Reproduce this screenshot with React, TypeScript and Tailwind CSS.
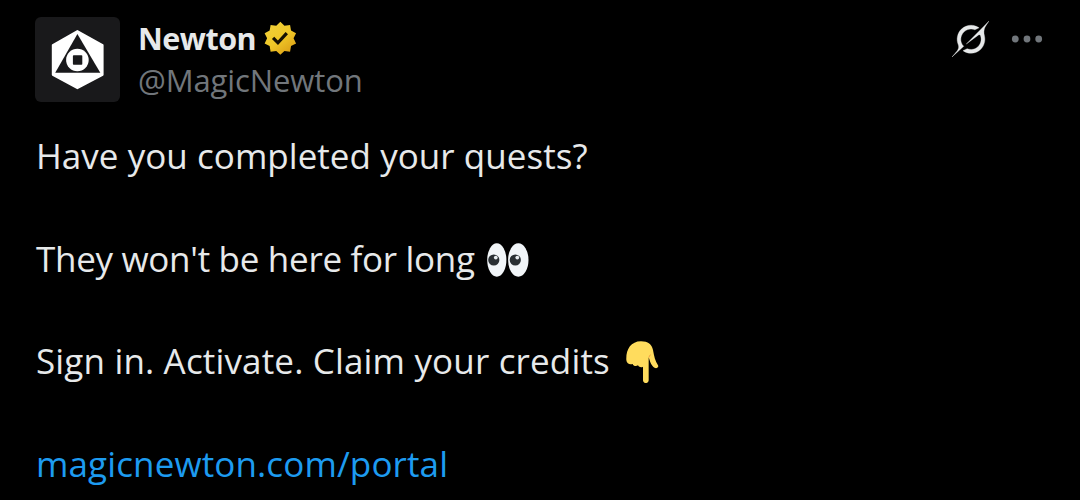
import type { ReactNode } from "react";

function Avatar() {
  return (
    <div className="size-[85px] shrink-0 overflow-hidden rounded-md bg-[#19191b]">
      <svg viewBox="0 0 85 85" className="size-full">
        <path
          d="M42.4 14 67.6 28.2V57.8L42.4 71.2 17.8 57.8V28.2Z"
          fill="#fff"
          stroke="#fff"
          strokeWidth="2"
          strokeLinejoin="round"
        />
        <path d="M42.4 17 65.3 55.8H20.2Z" fill="#19191b" />
        <circle cx="42.4" cy="43" r="11.3" fill="#fff" />
        <rect x="37.9" y="38.3" width="9.4" height="9.4" rx="0.8" fill="#19191b" />
      </svg>
    </div>
  );
}

function GoldBadge() {
  return (
    <svg viewBox="0 0 22 22" className="size-[38.7px] shrink-0">
      <defs>
        <linearGradient id="gold" x1="4" y1="2" x2="18" y2="20" gradientUnits="userSpaceOnUse">
          <stop offset="0" stopColor="#efcf3a" />
          <stop offset="0.5" stopColor="#f0c828" />
          <stop offset="1" stopColor="#d99b14" />
        </linearGradient>
      </defs>
      <path
        fill="url(#gold)"
        d="M13.324 3.848L11 1.6 8.676 3.848l-3.201-.453-.559 3.184L2.06 8.095 3.48 11l-1.42 2.904 2.856 1.516.559 3.184 3.201-.452L11 20.4l2.324-2.248 3.201.452.559-3.184 2.856-1.516L18.52 11l1.42-2.905-2.856-1.516-.559-3.184z"
      />
      <path
        fill="#151003"
        d="M6.234 11.423l3.428 3.428 5.683-6.206-1.347-1.247-4.4 4.795-2.072-2.072z"
      />
    </svg>
  );
}

function GrokIcon() {
  return (
    <svg viewBox="0 0 33 32" className="h-[36px] w-[37px]" fill="#e7e9ea" stroke="#e7e9ea" strokeWidth="0.3">
      <path d="M12.745 20.54l10.97-8.19c.539-.4 1.307-.244 1.564.38 1.349 3.288.746 7.241-1.938 9.955-2.683 2.714-6.417 3.31-9.83 1.954l-3.728 1.745c5.347 3.697 11.84 2.782 15.898-1.324 3.219-3.255 4.216-7.692 3.284-11.693l.008.009c-1.351-5.878.332-8.227 3.782-13.031L33 0l-4.54 4.59v-.014L12.743 20.544m-2.263 1.987c-3.837-3.707-3.175-9.446.1-12.755 2.42-2.449 6.388-3.448 9.852-1.979l3.72-1.737c-.67-.49-1.53-1.017-2.515-1.387-4.455-1.854-9.789-.931-13.41 2.728-3.483 3.523-4.579 8.94-2.697 13.561 1.405 3.454-.899 5.898-3.22 8.364C1.49 30.2.666 31.074 0 32l10.478-9.466" />
    </svg>
  );
}

function MoreIcon() {
  return (
    <svg viewBox="0 0 32 8" className="h-2 w-8" fill="#71767b">
      <circle cx="4.3" cy="4" r="3.4" />
      <circle cx="16" cy="4" r="3.4" />
      <circle cx="27.7" cy="4" r="3.4" />
    </svg>
  );
}

function Eyes() {
  return (
    <svg viewBox="0 0 42 34" className="h-[34px] w-[42px] shrink-0">
      <ellipse cx="9.8" cy="17" rx="9.6" ry="16.7" fill="#f1f5f8" />
      <ellipse cx="31.3" cy="17" rx="10.2" ry="16.7" fill="#f1f5f8" />
      <circle cx="6.8" cy="17" r="5.6" fill="#292f33" />
      <circle cx="28.3" cy="17" r="5.6" fill="#292f33" />
      <circle cx="8.8" cy="14.6" r="1.9" fill="#e8edf0" />
      <circle cx="30.3" cy="14.6" r="1.9" fill="#e8edf0" />
    </svg>
  );
}

function PointingHand() {
  return (
    <svg viewBox="0 0 98 127" className="h-[42.3px] w-[32.7px] shrink-0" fill="#ffdc5d">
      <path d="M1 58C-1 28 13 1 45 1C66 1 78 10 81 27C84 45 88 61 96 73C99 78 93 83 87 81C80 78 76 71 73 64L68 49L68 118C68 129 51 129 51 118V77C47 80 40 80 36 73C31 77 22 76 20 69C12 72 2 69 1 58Z" />
      <path d="M69 49C71 44 72 42 74 41" fill="none" stroke="#ef9645" strokeWidth="3" />
    </svg>
  );
}

function Line({ children }: { children: ReactNode }) {
  return <p className="flex h-[51.3px] items-center whitespace-pre">{children}</p>;
}

export default function App() {
  return (
    <article className="h-[500px] w-[1080px] overflow-hidden bg-black pl-[35px] pr-[37px] pt-[17px] font-['Open_Sans',sans-serif] font-[450] text-[#e7e9ea]">
      <header className="flex h-[85px]">
        <Avatar />
        <div className="ml-[18px] flex flex-col">
          <div className="flex h-[42px] items-center">
            <span className="text-[30.5px] font-bold leading-[42px] tracking-[-0.5px]">Newton</span>
            <span className="ml-[5px]"><GoldBadge /></span>
          </div>
          <span className="text-[31px] leading-[42px] tracking-[-0.1px] text-[#71767b]">@MagicNewton</span>
        </div>
        <div className="ml-auto flex h-[43px] items-center gap-[22px]">
          <GrokIcon />
          <MoreIcon />
        </div>
      </header>
      <div className="pl-px pt-[28px] text-[35px] leading-[51.3px]">
        <Line><span className="tracking-[0.04px]">Have you completed your quests?</span></Line>
        <Line> </Line>
        <Line>
          <span className="tracking-[-0.3px]">They won't be here for long</span>
          <span className="ml-3 pt-[3px]"><Eyes /></span>
        </Line>
        <Line> </Line>
        <Line>
          <span className="tracking-[0.16px]">Sign in. Activate. Claim your credits</span>
          <span className="ml-4 pt-[3px]"><PointingHand /></span>
        </Line>
        <Line> </Line>
        <Line><a className="tracking-[0.12px] text-[#1d9bf0]">magicnewton.com/portal</a></Line>
      </div>
    </article>
  );
}
